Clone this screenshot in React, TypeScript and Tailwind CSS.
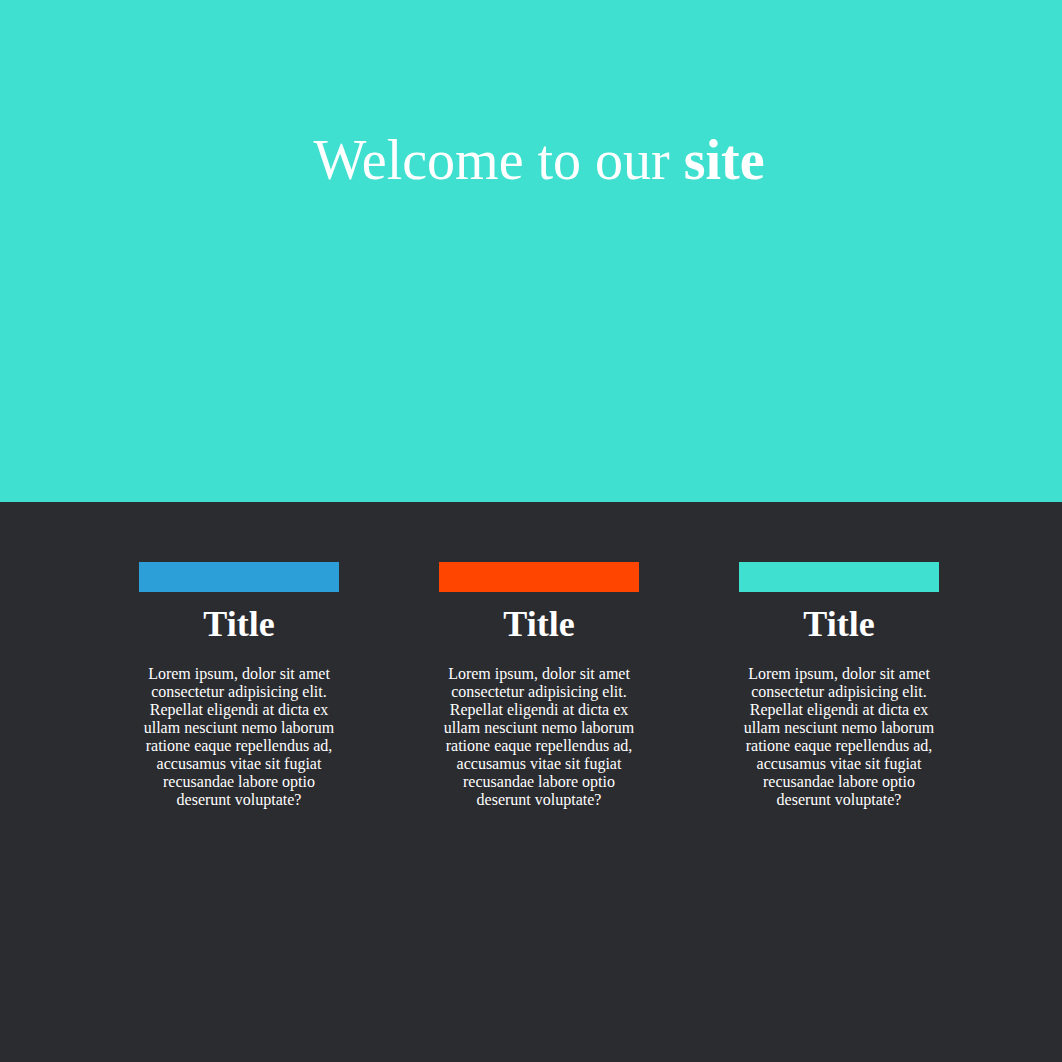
const cards = [
  { color: "bg-[#2d9fd8]" },
  { color: "bg-[#ff4500]" },
  { color: "bg-[#40e0d0]" },
];

const lorem =
  "Lorem ipsum, dolor sit amet consectetur adipisicing elit. Repellat eligendi at dicta ex ullam nesciunt nemo laborum ratione eaque repellendus ad, accusamus vitae sit fugiat recusandae labore optio deserunt voluptate?";

export default function App() {
  return (
    <div className="min-h-[1062px] bg-[#2b2c30] font-['Liberation_Serif',serif] text-white">
      {/* hero */}
      <header className="h-[502px] bg-[#40e0d0] pl-4 pt-[118px]">
        <h1 className="text-center text-[56px] font-normal">
          Welcome to our <span className="font-bold">site</span>
        </h1>
      </header>

      {/* cards */}
      <section className="flex justify-center gap-[100px] pl-4 pt-[60px]">
        {cards.map((card, i) => (
          <div key={i} className="flex w-[200px] flex-col items-center">
            <div className={`h-[30px] w-[200px] ${card.color}`} />
            <h2 className="mt-[5px] text-[36px] font-bold">Title</h2>
            <p className="mt-[14px] w-[200px] text-center text-[16px] leading-[18px]">
              {lorem}
            </p>
          </div>
        ))}
      </section>
    </div>
  );
}
